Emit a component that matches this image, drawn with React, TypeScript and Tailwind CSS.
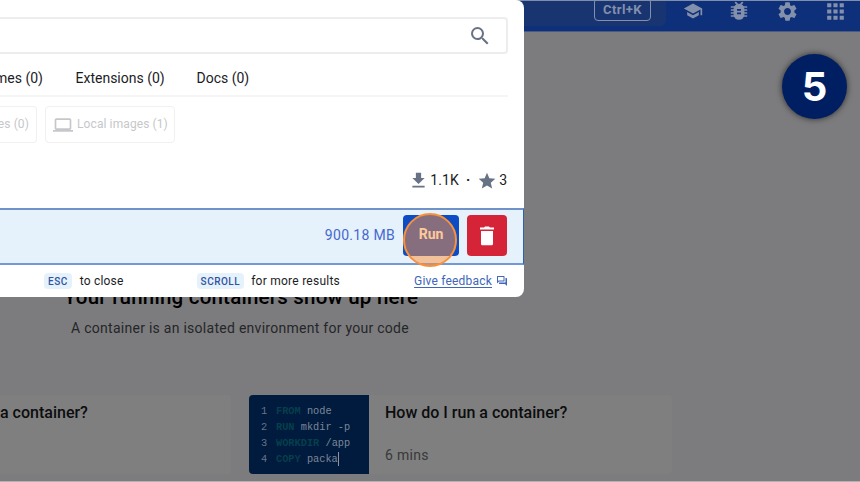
import React from "react";
import {
  MdSchool,
  MdSettings,
  MdApps,
  MdSearch,
  MdLaptop,
  MdFileDownload,
  MdStar,
  MdOutlineQuestionAnswer,
} from "react-icons/md";

function BugIcon() {
  return (
    <svg viewBox="0 0 18 20" className="h-5 w-[18px]" fill="none" stroke="currentColor">
      <path d="M5.2 1.2 7.4 3.4M12.8 1.2 10.6 3.4" strokeWidth="1.8" />
      <path d="M.8 6h16.4M.8 9h16.4M.8 12h16.4M.8 15h16.4" strokeWidth="1.4" />
      <rect x="3.6" y="2.8" width="10.8" height="16" rx="5.2" fill="currentColor" stroke="none" />
      <path d="M7 8.8h4M7 12.4h4" stroke="#0e2f79" strokeWidth="1.7" />
    </svg>
  );
}

function TrashIcon() {
  return (
    <svg viewBox="0 0 14 20" className="h-5 w-3.5" fill="currentColor">
      <path d="M0 1.5h4L5 .5h4l1 1h4v2H0zM1 5h12v13a1.3 1.3 0 0 1-1.3 1.3H2.3A1.3 1.3 0 0 1 1 18z" />
    </svg>
  );
}

function TopBar() {
  return (
    <header className="flex h-8 items-start border-b border-t border-b-[#4a5a80] border-t-[#7f8ea9] bg-[#0e2f79] text-[#8390ac]">
      <div className="flex h-[25px] w-[666px] justify-end rounded-br-md bg-[#183572] pr-[15px]">
        <div className="-mt-[3px] flex h-[23px] w-[57px] items-center justify-center rounded-[4px] border border-[#8390ac] text-[13px] font-bold leading-none tracking-[0.4px]">
          <span>Ctrl+K</span>
        </div>
      </div>
      <nav className="ml-1 flex h-5 items-center">
        <span className="flex w-[46px] justify-center">
          <MdSchool className="size-5" />
        </span>
        <span className="flex w-[46px] justify-center">
          <BugIcon />
        </span>
        <span className="flex w-[50px] justify-center">
          <MdSettings className="size-[23px]" />
        </span>
        <span className="flex w-[46px] justify-center">
          <MdApps className="size-[25px]" />
        </span>
      </nav>
    </header>
  );
}

function CodeLine({ n, word, rest, caret }: { n: number; word: string; rest: string; caret?: boolean }) {
  return (
    <div className="flex h-4 items-center whitespace-pre">
      <span className="w-[15px] text-[#66748a]">{n}</span>
      <span className="font-bold text-[#063f4c]">{word}</span>
      <span className="text-[#7b8799]"> {rest}</span>
      {caret && <span className="h-3.5 w-px bg-[#8a94a3]" />}
    </div>
  );
}

function Page() {
  return (
    <main className="flex h-[449px] flex-col bg-[#7c7c7e]">
      <section className="mt-[253px] flex w-[482px] flex-col items-center whitespace-nowrap">
        <h1 className="text-[20.5px] font-medium leading-6 tracking-[0.22px] text-black">Your running containers show up here</h1>
        <p className="mt-[9px] pr-[2px] text-[14px] leading-5 tracking-[0.27px] text-[#252628]">
          A container is an isolated environment for your code
        </p>
      </section>
      <section className="mt-[57px] flex gap-[18px]">
        <article className="h-[79px] w-[231px] rounded-r bg-[#7f7f7f] pt-[8px] text-[16px] font-medium leading-5 text-[#0c0d0e]">
          a container?
        </article>
        <article className="flex h-[79px] w-[423px] overflow-hidden rounded bg-[#7f7f7f]">
          <div className="w-[120px] bg-[#001b3d] pl-[12px] pt-[8px] font-['Liberation_Mono',monospace] text-[10.3px] leading-4">
            <CodeLine n={1} word="FROM" rest="node" />
            <CodeLine n={2} word="RUN" rest="mkdir -p" />
            <CodeLine n={3} word="WORKDIR" rest="/app" />
            <CodeLine n={4} word="COPY" rest="packa" caret />
          </div>
          <div className="flex flex-col pl-4 pt-[8px]">
            <h2 className="text-[16px] font-medium leading-5 text-[#0c0d0e]">How do I run a container?</h2>
            <p className="mt-[22px] text-[14px] leading-5 tracking-[0.3px] text-[#38393b]">6 mins</p>
          </div>
        </article>
      </section>
    </main>
  );
}

function Key({ label }: { label: string }) {
  return (
    <kbd className="flex h-4 items-center rounded-[4px] bg-[#e5f2fc] px-[4px] font-['Roboto',sans-serif] text-[10px] font-medium tracking-[0.5px] text-[#31539f]">
      {label}
    </kbd>
  );
}

function SearchDialog() {
  return (
    <div className="absolute left-0 top-0 flex h-[297px] w-[524px] flex-col whitespace-nowrap rounded-r-lg bg-white text-[#1b1c1f]">
      <div className="mr-4 mt-[17px] flex h-[37px] items-center justify-end rounded-r border-2 border-l-0 border-[#ededef] pr-[14px]">
        <MdSearch className="size-6 text-[#677285]" />
      </div>
      <div className="mr-4 flex h-[43px] items-center border-b-2 border-[#f5f5f6] pt-[7px] text-[14px]">
        <span className="flex w-[43px] justify-end">mes (0)</span>
        <span className="ml-[32.5px] w-[88px]">Extensions (0)</span>
        <span className="ml-[33px]">Docs (0)</span>
      </div>
      <div className="mt-[9px] flex h-[37px] gap-2 text-[12px] tracking-[0.1px] text-[#c6c7ca]">
        <div className="flex w-[37px] items-center justify-end rounded-r border border-l-0 border-[#f0f0f1] pb-[2px] pr-[7px]">es (0)</div>
        <div className="flex w-[130px] items-center gap-[4px] rounded border border-[#f0f0f1] pl-[7px]">
          <MdLaptop className="size-5" />
          <span className="pb-[2px]">Local images (1)</span>
        </div>
      </div>
      <div className="mr-[17px] flex h-[65px] items-center justify-end pt-[10px] text-[14px]">
        <MdFileDownload className="size-[21px] text-[#677285]" />
        <span className="ml-px tracking-[0.1px]">1.1K</span>
        <span className="ml-[7px] mr-[7px] font-bold">·</span>
        <MdStar className="size-[20px] text-[#677285]" />
        <span className="ml-[2px]">3</span>
      </div>
      <div className="flex h-[57px] items-center justify-end gap-2 border-y-2 border-r border-t-[#6f93c9] border-b-[#7398d5] border-r-[#315fae] bg-[#e5f1fb] pb-[2px] pr-4">
        <span className="text-[14px] tracking-[0.3px] text-[#4668cf]">900.18 MB</span>
        <button className="h-[41px] w-14 rounded bg-[#0d4cc5] pb-[2px] text-[14px] font-bold text-white">Run</button>
        <button className="flex h-[41px] w-10 items-center justify-center rounded bg-[#d52438] text-white">
          <TrashIcon />
        </button>
      </div>
      <footer className="flex h-8 items-center text-[12px] tracking-[0.2px]">
        <div className="ml-[44px] flex items-center gap-[8px]">
          <Key label="ESC" />
          <span>to close</span>
        </div>
        <div className="ml-[73px] flex items-center gap-[7px]">
          <Key label="SCROLL" />
          <span className="tracking-[0.25px]">for more results</span>
        </div>
        <div className="ml-auto mr-4 flex items-center gap-[4px] text-[#4066ba]">
          <a className="underline underline-offset-2">Give feedback</a>
          <MdOutlineQuestionAnswer className="size-3" />
        </div>
      </footer>
    </div>
  );
}

export default function App() {
  return (
    <div className="relative h-[482px] w-[860px] overflow-hidden bg-[#b2b2b3] font-['Roboto',sans-serif]">
      <TopBar />
      <Page />
      <SearchDialog />
      <div className="absolute left-[403px] top-[213px] size-[54px] rounded-full border-2 border-[#f89139] bg-[#ff9137]/50" />
      <div className="absolute left-[782px] top-[54px] flex size-[65px] items-center justify-center rounded-full bg-[#001f63] font-['Inter',sans-serif] text-[40px] font-bold text-white shadow-[0_0_6px_rgba(0,0,0,0.65)]">
        5
      </div>
    </div>
  );
}
